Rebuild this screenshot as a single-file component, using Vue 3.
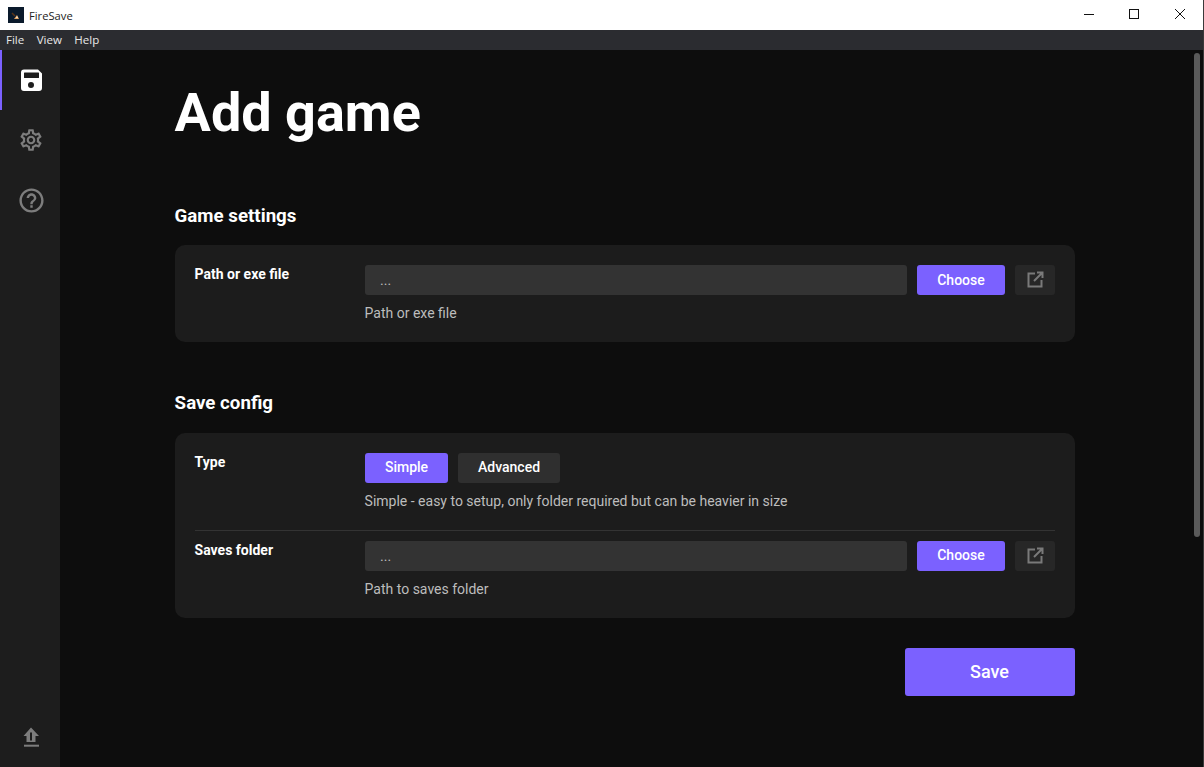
<script setup>
const menus = ['File', 'View', 'Help']
</script>

<template>
  <div class="app">
    <header class="titlebar">
      <svg class="logo" width="16" height="16" viewBox="0 0 16 16"><rect width="16" height="16" fill="#0a1a2c"/><path d="M4 6l3 3" stroke="#5a3418" stroke-width="1.500"/><path d="M6 12l3-4 2 4z" fill="#e0a060"/><path d="M8 11l1-2 1 2z" fill="#fff2d8"/></svg>
      <span class="title">FireSave</span>
      <div class="winctl">
        <svg width="46" height="30" viewBox="0 0 46 30"><path d="M18 14.500h10" stroke="#111" fill="none" /></svg>
        <svg width="46" height="30" viewBox="0 0 46 30"><rect x="17.500" y="9.500" width="9" height="9" stroke="#111" fill="none" /></svg>
        <svg width="46" height="30" viewBox="0 0 46 30"><path d="M17 9l10 10M27 9L17 19" stroke="#111" fill="none" /></svg>
      </div>
    </header>
    <nav class="menubar">
      <span v-for="m in menus" :key="m" class="menu">{{ m }}</span>
    </nav>
    <div class="body">
      <aside class="sidebar">
        <div class="side-item active">
          <svg width="32" height="32" viewBox="0 0 32 32"><path fill="#fff" fill-rule="evenodd" d="M9 5.500h14l4 4V24a3 3 0 0 1-3 3H9a3 3 0 0 1-3-3V8.500a3 3 0 0 1 3-3zM9.500 8.500a.5.5 0 0 0-.5.5v4.500a.5.5 0 0 0 .5.5h14a.5.5 0 0 0 .5-.5V9a.5.5 0 0 0-.5-.5zM16 18a3 3 0 1 0 0 6 3 3 0 0 0 0-6z"/></svg>
        </div>
        <div class="side-item">
          <svg width="26" height="26" viewBox="0 0 24 24"><path fill="#7d7d7d" d="M19.43 12.980c.04-.32.07-.64.07-.98 0-.34-.03-.66-.07-.98l2.110-1.650c.19-.15.24-.42.12-.64l-2-3.460c-.09-.16-.26-.25-.44-.25-.06 0-.12.01-.17.03l-2.490 1c-.52-.4-1.080-.73-1.690-.98l-.38-2.650C14.460 2.180 14.250 2 14 2h-4c-.25 0-.46.18-.49.42l-.38 2.650c-.61.25-1.170.59-1.690.98l-2.490-1c-.06-.02-.12-.03-.18-.03-.17 0-.34.09-.43.25l-2 3.460c-.13.22-.07.49.12.64l2.110 1.650c-.04.32-.07.65-.07.98 0 .33.03.66.07.98l-2.110 1.650c-.19.15-.24.42-.12.64l2 3.460c.09.16.26.25.44.25.06 0 .12-.01.17-.03l2.490-1c.52.4 1.080.73 1.690.98l.38 2.650c.03.24.24.42.49.42h4c.25 0 .46-.18.49-.42l.38-2.650c.61-.25 1.170-.59 1.690-.98l2.490 1c.06.02.12.03.18.03.17 0 .34-.09.43-.25l2-3.460c.12-.22.07-.49-.12-.64l-2.110-1.650zm-1.980-1.710c.04.31.05.52.05.73 0 .21-.02.43-.05.73l-.14 1.130.89.7 1.080.84-.7 1.210-1.270-.51-1.040-.42-.9.68c-.43.32-.84.56-1.250.73l-1.060.43-.16 1.130-.2 1.350h-1.400l-.19-1.350-.16-1.130-1.060-.43c-.43-.18-.83-.41-1.230-.71l-.91-.7-1.060.43-1.270.51-.7-1.210 1.080-.84.89-.7-.14-1.130c-.03-.31-.05-.54-.05-.74s.02-.43.05-.73l.14-1.130-.89-.7-1.080-.84.7-1.210 1.270.51 1.040.42.9-.68c.43-.32.84-.56 1.250-.73l1.060-.43.16-1.130.2-1.350h1.390l.19 1.350.16 1.130 1.060.43c.43.18.83.41 1.230.71l.91.7 1.060-.43 1.270-.51.7 1.210-1.070.85-.89.7.14 1.130zM12 8c-2.210 0-4 1.790-4 4s1.790 4 4 4 4-1.790 4-4-1.790-4-4-4zm0 6c-1.100 0-2-.9-2-2s.9-2 2-2 2 .9 2 2-.9 2-2 2z"/></svg>
        </div>
        <div class="side-item">
          <svg width="29" height="29" viewBox="0 0 24 24"><path fill="#7d7d7d" d="M11 18h2v-2h-2v2zm1-16C6.480 2 2 6.480 2 12s4.480 10 10 10 10-4.480 10-10S17.520 2 12 2zm0 18c-4.410 0-8-3.590-8-8s3.590-8 8-8 8 3.590 8 8-3.590 8-8 8zm0-14c-2.210 0-4 1.790-4 4h2c0-1.100.9-2 2-2s2 .9 2 2c0 2-3 1.750-3 5h2c0-2.250 3-2.500 3-5 0-2.210-1.790-4-4-4z"/></svg>
        </div>
        <div class="side-bottom">
          <svg width="32" height="32" viewBox="0 -1 32 32"><path fill="#7d7d7d" fill-rule="evenodd" d="M16 5.500l8 8.500h-3.500v6h-9v-6H8.500zM15 10.500V18.500h2V10.500z"/><rect x="9" y="22.700" width="15" height="2" fill="#7d7d7d"/></svg>
        </div>
      </aside>
      <main class="main">
        <div class="content">
          <h1 class="page-title">Add game</h1>

          <h2 class="section-title first">Game settings</h2>
          <section class="card">
            <div class="row">
              <div class="label">Path or exe file</div>
              <div class="field">
                <div class="controls">
                  <div class="input">...</div>
                  <button class="btn primary choose">Choose</button>
                  <button class="btn icon-btn">
                    <svg width="20" height="20" viewBox="0 0 20 20" fill="none" stroke="#7a7a7a" stroke-width="2"><path d="M10 3.500H3.500v13h13V10"/><path d="M12 2.500h5.500V8M17 3l-8 8"/></svg>
                  </button>
                </div>
                <p class="hint">Path or exe file</p>
              </div>
            </div>
          </section>

          <h2 class="section-title second">Save config</h2>
          <section class="card">
            <div class="row with-divider">
              <div class="label">Type</div>
              <div class="field">
                <div class="controls">
                  <button class="btn primary simple">Simple</button>
                  <button class="btn dark advanced">Advanced</button>
                </div>
                <p class="hint">Simple - easy to setup, only folder required but can be heavier in size</p>
              </div>
            </div>
            <div class="row lower">
              <div class="label">Saves folder</div>
              <div class="field">
                <div class="controls">
                  <div class="input">...</div>
                  <button class="btn primary choose">Choose</button>
                  <button class="btn icon-btn">
                    <svg width="20" height="20" viewBox="0 0 20 20" fill="none" stroke="#7a7a7a" stroke-width="2"><path d="M10 3.500H3.500v13h13V10"/><path d="M12 2.500h5.500V8M17 3l-8 8"/></svg>
                  </button>
                </div>
                <p class="hint">Path to saves folder</p>
              </div>
            </div>
          </section>

          <div class="actions">
            <button class="btn primary save">Save</button>
          </div>
        </div>
        <div class="scrollbar"><div class="thumb"></div></div>
      </main>
    </div>
  </div>
</template>

<style>
html, body { margin: 0; background: #0d0d0d; overflow: hidden; }
</style>

<style scoped>
.app { width: 1204px; height: 767px; display: flex; flex-direction: column; font-family: Roboto, "Noto Sans", sans-serif; color: #fff; overflow: hidden; position: relative; }
.app::after { content: ""; position: absolute; top: 0; right: 0; bottom: 0; width: 1px; background: #3a3a3a; }
.titlebar { height: 30px; background: #fff; display: flex; align-items: center; flex: none; color: #111; }
.logo { margin-left: 8px; display: block; flex: none; }
.title { margin-left: 5px; font: 11.200px "Open Sans", "Noto Sans", sans-serif; color: #222; }
.winctl { margin-left: auto; display: flex; }
.winctl svg { display: block; }
.menubar { height: 20px; background: #2b2c30; display: flex; align-items: center; padding: 0 0 2px 6px; box-sizing: border-box; gap: 12.500px; flex: none; font: 11.500px "Open Sans", "Noto Sans", sans-serif; color: #e8e8e8; }
.body { flex: 1; display: flex; min-height: 0; }
.sidebar { width: 60px; flex: none; background: #1d1d1d; display: flex; flex-direction: column; }
.side-item { height: 60px; display: flex; align-items: center; justify-content: center; box-sizing: border-box; flex: none; padding-left: 2px; }
.side-item.active { box-shadow: inset 2px 0 0 #7b61ff; }
.side-bottom { margin-top: auto; height: 60px; display: flex; align-items: center; justify-content: center; padding-left: 2px; }
.main { flex: 1; display: flex; background: #0d0d0d; min-width: 0; }
.content { flex: 1; padding: 0 115px; box-sizing: border-box; min-width: 0; }
.page-title { margin: 31px 0 0 -0.400px; font-size: 54px; line-height: 63px; font-weight: 700; }
.section-title { margin: 0 0 0 -0.400px; font-size: 18.720px; line-height: 21px; font-weight: 700; }
.section-title.first { margin-top: 62px; margin-bottom: 18px; }
.section-title.second { margin-top: 51px; margin-bottom: 19px; }
.card { background: #1c1c1c; border-radius: 10px; padding: 20px; }
.row { display: flex; }
.row.with-divider { border-bottom: 1px solid #333; padding-bottom: 20px; }
.row.lower { padding-top: 10px; }
.label { width: 170px; flex: none; font-size: 14px; font-weight: 700; line-height: 18px; text-indent: -0.400px; }
.field { flex: 1; min-width: 0; }
.controls { display: flex; gap: 10px; }
.input { flex: 1; height: 30px; background: #333; border-radius: 3px; padding: 0 15px; font-size: 14px; line-height: 30px; color: #bbb; box-sizing: border-box; }
.btn { border: 0; border-radius: 3px; height: 30px; padding: 0; color: #fff; font: 500 14px Roboto, sans-serif; display: flex; align-items: center; justify-content: center; box-sizing: border-box; }
.primary { background: #7b61ff; }
.dark { background: #2f2f2f; }
.choose { width: 88px; }
.lower .choose { padding-bottom: 2px; }
.simple { width: 83px; padding-bottom: 2px; }
.advanced { width: 102px; padding-bottom: 2px; }
.icon-btn { width: 40px; background: #272727; }
.hint { margin: 9px 0 0 -0.400px; font-size: 14px; line-height: 18px; color: #bdbdbd; }
.actions { display: flex; justify-content: flex-end; margin-top: 30px; }
.save { width: 170px; height: 48px; font-size: 18px; padding: 0 1px 2px 0; }
.scrollbar { width: 14px; flex: none; padding-top: 3px; display: flex; justify-content: center; }
.thumb { width: 6px; height: 484px; background: #5a5a5a; border-radius: 3px; }
</style>
